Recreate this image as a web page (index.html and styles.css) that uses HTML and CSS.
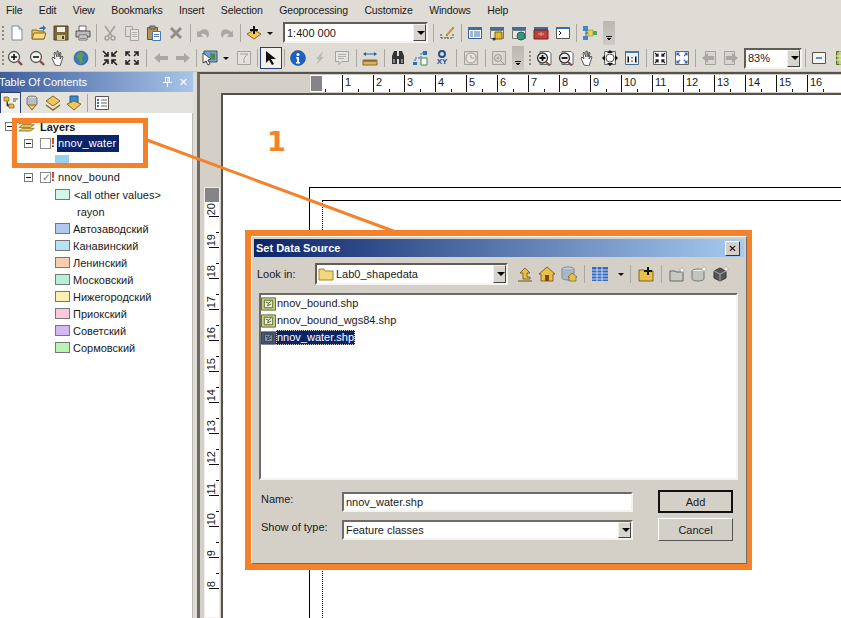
FILE: index.html
```html
<!DOCTYPE html>
<html lang="en">
<head>
    <meta charset="UTF-8">
    <title>ArcMap - Set Data Source</title>
    <link rel="stylesheet" href="styles.css">
</head>
<body>
    <svg class="defs" width="0" height="0">
        <symbol id="i-new" viewBox="0 0 16 16"><path d="M3 1h7l3 3v11H3z" fill="#fff" stroke="#7d8a99"/><path d="M10 1v3h3" fill="#dde" stroke="#7d8a99"/></symbol>
        <symbol id="i-open" viewBox="0 0 16 16"><path d="M1 5h5l1 1h6v8H1z" fill="#e8c55a" stroke="#8a6a1c"/><path d="M1 14l2-6h12l-2 6z" fill="#f5dc85" stroke="#8a6a1c"/><path d="M8 4c1-2 3-2 4-2V0l3 3-3 3V4c-1 0-2 0-4 0z" fill="#2c6fb5"/></symbol>
        <symbol id="i-save" viewBox="0 0 16 16"><path d="M1 1h14v14H1z" fill="#7a6a3a" stroke="#4c4220"/><path d="M4 2h8v5H4z" fill="#f1efe5"/><path d="M4 10h8v5H4z" fill="#d9c98f"/><path d="M9 11h2v3H9z" fill="#4c4220"/></symbol>
        <symbol id="i-print" viewBox="0 0 16 16"><path d="M4 1h7v5H4z" fill="#fff" stroke="#666"/><path d="M1 6h14v6H1z" fill="#bdbdb8" stroke="#555"/><path d="M4 10h8v5H4z" fill="#fff" stroke="#666"/><path d="M5 12h6M5 13.500h6" stroke="#888"/></symbol>
        <symbol id="i-cut" viewBox="0 0 16 16"><path d="M3 1l7 10M13 1L6 11" stroke="#a3a39c" stroke-width="1.600" fill="none"/><circle cx="5" cy="13" r="2" fill="none" stroke="#a3a39c" stroke-width="1.500"/><circle cx="11" cy="13" r="2" fill="none" stroke="#a3a39c" stroke-width="1.500"/></symbol>
        <symbol id="i-copy" viewBox="0 0 16 16"><path d="M1.500 1.500h7v10h-7z" fill="#ddd" stroke="#a3a39c"/><path d="M6.500 4.500h8v11h-8z" fill="#e6e4de" stroke="#a3a39c"/><path d="M8 7.500h5M8 9.500h5M8 11.500h5" stroke="#b0b0aa"/></symbol>
        <symbol id="i-paste" viewBox="0 0 16 16"><path d="M1.500 2.500h10v12h-10z" fill="#b8925a" stroke="#705426"/><path d="M4 1h5v3H4z" fill="#999" stroke="#555"/><path d="M6.500 6.500h8v9h-8z" fill="#fff" stroke="#4a76a8"/><path d="M8 9.500h5M8 11.500h5" stroke="#4a76a8"/></symbol>
        <symbol id="i-del" viewBox="0 0 16 16"><path d="M3 3l10 10M13 3L3 13" stroke="#8f8f8a" stroke-width="3"/></symbol>
        <symbol id="i-undo" viewBox="0 0 16 16"><path d="M4 6c4-3 9-2 9 3 0 2-1 3-2 4 0-3-2-5-6-4l2 3H1V5l1 2z" fill="#a9a9a3"/></symbol>
        <symbol id="i-redo" viewBox="0 0 16 16"><path d="M12 6C8 3 3 4 3 9c0 2 1 3 2 4 0-3 2-5 6-4l-2 3h6V5l-1 2z" fill="#a9a9a3"/></symbol>
        <symbol id="i-add" viewBox="0 0 16 16"><path d="M8 5l7 4-7 5-7-5z" fill="#efc75e" stroke="#8a6a1c"/><path d="M7 1h2v3h3v2H9v3H7V6H4V4h3z" fill="#111"/></symbol>
        <symbol id="i-editor" viewBox="0 0 16 16"><path d="M2 13h12M2 9v4M8 9v4M14 9v4" stroke="#444" stroke-dasharray="2 1"/><path d="M7 10l7-8 1 1-7 8z" fill="#d9a441" stroke="#8a6a1c" stroke-width=".5"/></symbol>
        <symbol id="i-toc" viewBox="0 0 16 16"><path d="M1.500 2.500h13v11h-13z" fill="#fff" stroke="#3a5a8c"/><path d="M1 2h14v3H1z" fill="#3a6ea8"/><path d="M3 7h3M7 7h6M3 9h3M7 9h6M3 11h3M7 11h6" stroke="#3a6ea8"/></symbol>
        <symbol id="i-catalog" viewBox="0 0 16 16"><path d="M1 2h14v3H1z" fill="#3a6ea8"/><path d="M1.500 5.500h13v8h-13z" fill="#e9e6dc" stroke="#777"/><path d="M6 7h7v7H6z" fill="#e0b92c" stroke="#7a6410"/><circle cx="5" cy="14" r="1.500" fill="#333"/></symbol>
        <symbol id="i-search" viewBox="0 0 16 16"><path d="M1 2h14v3H1z" fill="#3a6ea8"/><path d="M1.500 5.500h13v8h-13z" fill="#e9e6dc" stroke="#777"/><circle cx="10" cy="11" r="4" fill="#3a9a6a" stroke="#1c5a8c"/></symbol>
        <symbol id="i-toolbox" viewBox="0 0 16 16"><path d="M1 2h14v3H1z" fill="#3a6ea8"/><path d="M1 5h14v9H1z" fill="#c0403a" stroke="#70201c"/><path d="M5 9h6M8 7v4" stroke="#e8a0a0"/></symbol>
        <symbol id="i-python" viewBox="0 0 16 16"><path d="M1.500 2.500h13v11h-13z" fill="#fff" stroke="#555"/><path d="M1 2h14v2H1z" fill="#3a6ea8"/><path d="M4 6l2 2-2 2" stroke="#111" fill="none"/></symbol>
        <symbol id="i-model" viewBox="0 0 16 16"><path d="M4 4v8M4 8h7" stroke="#555"/><path d="M1 1h5v5H1zM1 11h5v4H1z" fill="#3a8ad0"/><path d="M6 5h5v6H6z" fill="#e6d84a" stroke="#777" stroke-width=".5"/><path d="M11 6h4v4h-4z" fill="#4aa860"/></symbol>
        <symbol id="i-zin" viewBox="0 0 16 16"><circle cx="7" cy="7" r="5.500" fill="#f3f3ee" stroke="#555" stroke-width="1.300"/><path d="M4 7h6M7 4v6" stroke="#111" stroke-width="1.600"/><path d="M11 11l4 4" stroke="#8c4a4a" stroke-width="2.400"/></symbol>
        <symbol id="i-zout" viewBox="0 0 16 16"><circle cx="7" cy="7" r="5.500" fill="#f3f3ee" stroke="#555" stroke-width="1.300"/><path d="M4 7h6" stroke="#111" stroke-width="1.600"/><path d="M11 11l4 4" stroke="#8c4a4a" stroke-width="2.400"/></symbol>
        <symbol id="i-pan" viewBox="0 0 16 16"><path d="M4 15L1 8l1-1 2 2-1-6 1-1 2 5V1h1l1 6 1-5 1 1-1 6 2-3 1 1-2 6-1 3z" fill="#fff" stroke="#333" stroke-width=".8"/></symbol>
        <symbol id="i-globe" viewBox="0 0 16 16"><circle cx="8" cy="8" r="7" fill="#3a78c0" stroke="#28508a" stroke-width=".6"/><path d="M5 3l4-1 2 3-2 3 1 4-3 2-1-5-3-2z" fill="#5aa050"/></symbol>
        <symbol id="i-fin" viewBox="0 0 16 16"><path d="M1 1l5 5M6 2v4H2M15 1l-5 5M10 2v4h4M1 15l5-5M6 14v-4H2M15 15l-5-5M10 14v-4h4" stroke="#222" stroke-width="1.600" fill="none"/></symbol>
        <symbol id="i-fout" viewBox="0 0 16 16"><path d="M6 6L2 2M2 6V2h4M10 6l4-4M14 6V2h-4M6 10l-4 4M2 10v4h4M10 10l4 4M14 10v4h-4" stroke="#222" stroke-width="1.500" fill="none"/></symbol>
        <symbol id="i-back" viewBox="0 0 16 16"><path d="M1 8l6-5v3h8v4H7v3z" fill="#a9a9a3"/></symbol>
        <symbol id="i-fwd" viewBox="0 0 16 16"><path d="M15 8L9 3v3H1v4h8v3z" fill="#a9a9a3"/></symbol>
        <symbol id="i-select" viewBox="0 0 16 16"><path d="M2 1h13v11H2z" fill="#6aa6d0" stroke="#555"/><path d="M8 3l5 1v6l-4-1z" fill="#4a8a4a"/><path d="M1 3l8 6-3 1 2 4-2 1-2-4-3 2z" fill="#fff" stroke="#222" stroke-width=".8"/></symbol>
        <symbol id="i-clear" viewBox="0 0 16 16"><path d="M1.500 1.500h13v13h-13z" fill="#e4e2dc" stroke="#a3a39c"/><path d="M4 4h8l-4 4v5M12 4L8 8" stroke="#a3a39c" fill="none"/></symbol>
        <symbol id="i-arrow" viewBox="0 0 16 16"><path d="M3 1l10 8H8l3 5-2 1-3-5-3 3z" fill="#111"/></symbol>
        <symbol id="i-info" viewBox="0 0 16 16"><circle cx="8" cy="8" r="7.500" fill="#1c62c0" stroke="#123f80" stroke-width=".5"/><path d="M6 7h3v5h1v1.500H6V12h1V8.500H6z" fill="#fff"/><circle cx="8" cy="4.500" r="1.500" fill="#fff"/></symbol>
        <symbol id="i-bolt" viewBox="0 0 16 16"><path d="M11 1L4 9h3l-3 6 8-8H9z" fill="#b9b9b3"/></symbol>
        <symbol id="i-popup" viewBox="0 0 16 16"><path d="M1.500 1.500h13v10H8l-3 3v-3H1.500z" fill="#e6e4de" stroke="#a3a39c"/><path d="M4 4.500h8M4 6.500h8M4 8.500h6" stroke="#b0b0aa"/></symbol>
        <symbol id="i-measure" viewBox="0 0 16 16"><path d="M1 10h14v5H1z" fill="#d9b168" stroke="#8a6a1c"/><path d="M3 10v2M5 10v2M7 10v2M9 10v2M11 10v2M13 10v2" stroke="#6a4c10"/><path d="M1 4l3-2v1.500h8V2l3 2-3 2V4.500H4V6z" fill="#1c62a8"/></symbol>
        <symbol id="i-find" viewBox="0 0 16 16"><path d="M2 6l2-5h3v5h2V1h3l2 5v8H9V9H7v5H2z" fill="#333"/><path d="M3 9h2v4H3zM11 9h2v4h-2z" fill="#8b8b8b"/></symbol>
        <symbol id="i-route" viewBox="0 0 16 16"><path d="M3 14V8h6V3h4" stroke="#2c6fb5" fill="none" stroke-dasharray="2 1"/><path d="M1 12h4v3H1zM11 1h4v4h-4z" fill="#2c6fb5"/><path d="M9 8h6v7H9z" fill="#fff" stroke="#3a8a4a"/></symbol>
        <symbol id="i-clock" viewBox="0 0 16 16"><path d="M1.500 1.500h13v13h-13z" fill="#d9d7d0" stroke="#a3a39c"/><circle cx="8" cy="8" r="5" fill="#e8e6e0" stroke="#9a9a94"/><path d="M8 5v3h3" stroke="#9a9a94" fill="none"/></symbol>
        <symbol id="i-viewer" viewBox="0 0 16 16"><path d="M1.500 1.500h13v13h-13z" fill="#d9d7d0" stroke="#a3a39c"/><circle cx="7" cy="8" r="3.500" fill="none" stroke="#9a9a94"/><path d="M5.500 8h3M7 6.500v3M10 11l3 3" stroke="#9a9a94"/></symbol>
        <symbol id="i-pzin" viewBox="0 0 16 16"><path d="M4 1.500h9l2 2v11H4z" fill="#fff" stroke="#666"/><circle cx="6.500" cy="8" r="5" fill="#eee" stroke="#333" stroke-width="1.300"/><path d="M3.500 8h6M6.500 5v6" stroke="#111" stroke-width="1.800"/><path d="M10 12l4 3.500" stroke="#8c4a4a" stroke-width="2.200"/></symbol>
        <symbol id="i-pzout" viewBox="0 0 16 16"><path d="M4 1.500h9l2 2v11H4z" fill="#fff" stroke="#666"/><circle cx="6.500" cy="8" r="5" fill="#eee" stroke="#333" stroke-width="1.300"/><path d="M3.500 8h6" stroke="#111" stroke-width="1.800"/><path d="M10 12l4 3.500" stroke="#8c4a4a" stroke-width="2.200"/></symbol>
        <symbol id="i-pfull" viewBox="0 0 16 16"><path d="M2.500 1.500h11v13h-11z" fill="#e8e8e2" stroke="#666"/><circle cx="8" cy="8" r="4" fill="#fff" stroke="#555"/><path d="M8 0l3 3H5zM8 16l-3-3h6zM0 8l3-3v6zM16 8l-3 3V5z" fill="#111"/></symbol>
        <symbol id="i-p11" viewBox="0 0 16 16"><path d="M1.500 1.500h13v13h-13z" fill="#eef1f4" stroke="#4a6a8c"/><path d="M1 1h14v2H1z" fill="#4a78a8"/><path d="M3.500 6.500h1.500v6H3.500zM11 6.500h1.500v6H11zM7.500 7h1v1.500h-1zM7.500 10.500h1V12h-1z" fill="#111"/></symbol>
        <symbol id="i-pfin" viewBox="0 0 16 16"><path d="M1.500 1.500h13v13h-13z" fill="#fff" stroke="#666"/><path d="M3 3l3 3M6 3.500V6H3.500M13 3l-3 3M10 3.500V6h2.500M3 13l3-3M6 12.500V10H3.500M13 13l-3-3M10 12.500V10h2.500" stroke="#222" stroke-width="1.300" fill="none"/></symbol>
        <symbol id="i-pfout" viewBox="0 0 16 16"><path d="M1.500 1.500h13v13h-13z" fill="#fff" stroke="#666"/><path d="M6 6L3 3M3 5.500V3h2.500M10 6l3-3M13 5.500V3h-2.500M6 10l-3 3M3 10.500V13h2.500M10 10l3 3M13 10.500V13h-2.500" stroke="#3a6ea8" stroke-width="1.200" fill="none"/></symbol>
        <symbol id="i-pback" viewBox="0 0 16 16"><path d="M4.500 1.500h10v13h-10z" fill="#d9d7d0" stroke="#a3a39c"/><path d="M1 8l6-5v3h6v4H7v3z" fill="#a9a9a3"/></symbol>
        <symbol id="i-pfwd" viewBox="0 0 16 16"><path d="M1.500 1.500h10v13h-10z" fill="#d9d7d0" stroke="#a3a39c"/><path d="M15 8L9 3v3H3v4h6v3z" fill="#a9a9a3"/></symbol>
        <symbol id="i-focus" viewBox="0 0 16 16"><path d="M1.500 2.500h13v11h-13z" fill="#f4f4ef" stroke="#555"/><path d="M5 8h6" stroke="#3a6ea8" stroke-width="1.500"/></symbol>
        <symbol id="i-grid" viewBox="0 0 16 16"><path d="M1.500 1.500h13v13h-13z" fill="#a6bc5a" stroke="#5a6a20"/><path d="M5 1v14M9 1v14M1 6h14M1 10h14" stroke="#e4ecc0"/></symbol>
        <symbol id="t-list" viewBox="0 0 16 16"><path d="M1 2h4l1 1v3H1zM6 9h4l1 1v3H6z" fill="#e8b84a" stroke="#8a6a1c" stroke-width=".8"/><path d="M4 6v5h2M10 4h5M10 6h3" stroke="#555"/></symbol>
        <symbol id="t-source" viewBox="0 0 16 16"><ellipse cx="8" cy="3" rx="5" ry="2" fill="#d7d9dd" stroke="#777"/><path d="M3 3v6c0 1 2 2 5 2s5-1 5-2V3" fill="#b9bcc2" stroke="#777"/><path d="M4 10l4 5 4-5z" fill="#efc75e" stroke="#8a6a1c"/></symbol>
        <symbol id="t-vis" viewBox="0 0 16 16"><path d="M8 1l7 5-7 5-7-5z" fill="#efc75e" stroke="#8a6a1c"/><path d="M1 10l7 5 7-5" fill="none" stroke="#8a6a1c" stroke-width="1.500"/></symbol>
        <symbol id="t-sel" viewBox="0 0 16 16"><path d="M4 1h8v7H4z" fill="#3a8ad0" stroke="#1c5a8c"/><path d="M1 9l7-3 7 3-7 6z" fill="#efc75e" stroke="#8a6a1c"/></symbol>
        <symbol id="t-opt" viewBox="0 0 16 16"><path d="M1.500 1.500h13v13h-13z" fill="#fff" stroke="#555"/><path d="M3 4h2v2H3zM3 7h2v2H3zM3 10h2v2H3z" fill="#3a6ea8"/><path d="M7 5h6M7 8h6M7 11h6" stroke="#666"/></symbol>
        <symbol id="i-layers" viewBox="0 0 20 14"><path d="M5 1h13l-4 3H1zM5 5h13l-4 3H1zM5 9h13l-4 3H1z" fill="#efc75e" stroke="#8a6a1c" stroke-width=".9"/></symbol>
        <symbol id="i-folder" viewBox="0 0 16 14"><path d="M1 2h5l1 2h8v9H1z" fill="#f2d77c" stroke="#a5852a"/></symbol>
        <symbol id="d-up" viewBox="0 0 16 16"><path d="M8 2l5 5h-3v4h3v2H6V7H3z" fill="#e8c04a" stroke="#6a5210" stroke-width=".8"/><path d="M1 15h14" stroke="#6a5210"/></symbol>
        <symbol id="d-home" viewBox="0 0 16 16"><path d="M8 1L0 8h2v7h12V8h2z" fill="#e8c04a" stroke="#6a5210" stroke-width=".8"/><path d="M6 9h4v6H6z" fill="#7a4a1c"/></symbol>
        <symbol id="d-dbhome" viewBox="0 0 16 16"><ellipse cx="7" cy="3" rx="6" ry="2" fill="#c9d4e0" stroke="#7a8896"/><path d="M1 3v9c0 1 3 2 6 2s6-1 6-2V3" fill="#aab6c4" stroke="#7a8896"/><path d="M11 7l5 4h-1v4H8v-4H7z" fill="#e8c04a" stroke="#6a5210" stroke-width=".6"/></symbol>
        <symbol id="d-views" viewBox="0 0 16 16"><path d="M0 1h16v14H0z" fill="#3a6ac0"/><path d="M5 1v14M10 1v14M0 4h16M0 7h16M0 10h16M0 13h16" stroke="#e0ecff" stroke-width=".8"/></symbol>
        <symbol id="d-newconn" viewBox="0 0 16 16"><path d="M1 4h5l1 1h8v10H1z" fill="#e8c04a" stroke="#6a5210" stroke-width=".8"/><path d="M9 1h2v3h3v2h-3v3H9V6H6V4h3z" fill="#111"/></symbol>
        <symbol id="d-newfold" viewBox="0 0 16 16"><path d="M1 5h5l1 1h7v9H1z" fill="#c9c9c3" stroke="#666"/><path d="M13 1l1 2 2 1-2 1-1 2-1-2-2-1 2-1z" fill="#fff" stroke="#999" stroke-width=".5"/></symbol>
        <symbol id="d-newdb" viewBox="0 0 16 16"><ellipse cx="7" cy="5" rx="6" ry="2" fill="#eee" stroke="#777"/><path d="M1 5v8c0 1 3 2 6 2s6-1 6-2V5" fill="#c4c4be" stroke="#777"/><path d="M13 0l1 2 2 1-2 1-1 2-1-2-2-1 2-1z" fill="#fff" stroke="#999" stroke-width=".5"/></symbol>
        <symbol id="d-newtool" viewBox="0 0 16 16"><path d="M1 5l6-3 6 3v7l-6 3-6-3z" fill="#555" stroke="#333"/><path d="M1 5l6 3 6-3M7 8v7" stroke="#aaa" fill="none"/><path d="M13 0l1 2 2 1-2 1-1 2-1-2-2-1 2-1z" fill="#fff" stroke="#999" stroke-width=".5"/></symbol>
        <symbol id="d-shp" viewBox="0 0 16 16"><path d="M.5 1.500h15v13H.5z" fill="#c9d48a" stroke="#55652a"/><path d="M3.500 4h9v8h-9z" fill="#f2f2e0" stroke="#55652a"/><path d="M5 6l3 1-1 3 4-2M8 7l3-2" stroke="#55652a" fill="none"/></symbol>
        <symbol id="d-shpsel" viewBox="0 0 16 16"><path d="M.5 1.500h15v13H.5z" fill="#4c5c72" stroke="#2c3850"/><path d="M3.500 4h9v8h-9z" fill="#8090a4" stroke="#2c3850"/><path d="M5 6l3 1-1 3 4-2M8 7l3-2" stroke="#2c3850" fill="none"/></symbol>
        <symbol id="i-pin" viewBox="0 0 9 10"><path d="M2.500.5h4v5h-4zM5 1v4" fill="none" stroke="#fff"/><path d="M0 5.500h9M4.500 6v4" stroke="#fff"/></symbol>
    </svg>

    <nav class="menubar">
        <span>File</span><span>Edit</span><span>View</span><span>Bookmarks</span><span>Insert</span><span>Selection</span><span>Geoprocessing</span><span>Customize</span><span>Windows</span><span>Help</span>
    </nav>

    <div class="toolbar toolbar-top">
        <span class="grip"></span>
        <span class="tool"><svg><use href="#i-new"/></svg></span>
        <span class="tool"><svg><use href="#i-open"/></svg></span>
        <span class="tool"><svg><use href="#i-save"/></svg></span>
        <span class="tool"><svg><use href="#i-print"/></svg></span>
        <span class="sep"></span>
        <span class="tool"><svg><use href="#i-cut"/></svg></span>
        <span class="tool"><svg><use href="#i-copy"/></svg></span>
        <span class="tool"><svg><use href="#i-paste"/></svg></span>
        <span class="tool"><svg><use href="#i-del"/></svg></span>
        <span class="sep sep-6"></span>
        <span class="tool"><svg><use href="#i-undo"/></svg></span>
        <span class="tool"><svg><use href="#i-redo"/></svg></span>
        <span class="sep sep-6"></span>
        <span class="tool"><svg><use href="#i-add"/></svg></span>
        <span class="drop-arrow"></span>
        <div class="combo scale-combo"><span class="combo-text">1:400 000</span><span class="combo-btn"></span></div>
        <span class="sep"></span>
        <span class="tool"><svg><use href="#i-editor"/></svg></span>
        <span class="sep sep-6"></span>
        <span class="tool"><svg><use href="#i-toc"/></svg></span>
        <span class="tool"><svg><use href="#i-catalog"/></svg></span>
        <span class="tool"><svg><use href="#i-search"/></svg></span>
        <span class="tool"><svg><use href="#i-toolbox"/></svg></span>
        <span class="tool"><svg><use href="#i-python"/></svg></span>
        <span class="sep"></span>
        <span class="tool"><svg><use href="#i-model"/></svg></span>
        <span class="chevron"></span>
    </div>

    <div class="toolbar toolbar-second">
        <span class="grip grip-thin"></span>
        <span class="tool"><svg><use href="#i-zin"/></svg></span>
        <span class="tool"><svg><use href="#i-zout"/></svg></span>
        <span class="tool"><svg><use href="#i-pan"/></svg></span>
        <span class="tool"><svg><use href="#i-globe"/></svg></span>
        <span class="sep sep-7"></span>
        <span class="tool"><svg><use href="#i-fin"/></svg></span>
        <span class="tool"><svg><use href="#i-fout"/></svg></span>
        <span class="sep sep-7"></span>
        <span class="tool"><svg><use href="#i-back"/></svg></span>
        <span class="tool"><svg><use href="#i-fwd"/></svg></span>
        <span class="sep"></span>
        <span class="tool"><svg><use href="#i-select"/></svg></span>
        <span class="drop-arrow"></span>
        <span class="tool gap-left"><svg><use href="#i-clear"/></svg></span>
        <span class="sep"></span>
        <span class="tool is-active"><svg><use href="#i-arrow"/></svg></span>
        <span class="sep"></span>
        <span class="tool"><svg><use href="#i-info"/></svg></span>
        <span class="tool"><svg><use href="#i-bolt"/></svg></span>
        <span class="tool"><svg><use href="#i-popup"/></svg></span>
        <span class="sep sep-6"></span>
        <span class="tool"><svg><use href="#i-measure"/></svg></span>
        <span class="sep sep-6"></span>
        <span class="tool"><svg><use href="#i-find"/></svg></span>
        <span class="tool"><svg><use href="#i-route"/></svg></span>
        <span class="tool xy"><span class="xy-dot"></span><b>XY</b></span>
        <span class="sep sep-7"></span>
        <span class="tool"><svg><use href="#i-clock"/></svg></span>
        <span class="sep sep-6"></span>
        <span class="tool"><svg><use href="#i-viewer"/></svg></span>
        <span class="chevron"></span>
        <span class="grip grip-inner"></span>
        <span class="tool"><svg><use href="#i-pzin"/></svg></span>
        <span class="tool"><svg><use href="#i-pzout"/></svg></span>
        <span class="tool"><svg><use href="#i-pan"/></svg></span>
        <span class="tool"><svg><use href="#i-pfull"/></svg></span>
        <span class="tool"><svg><use href="#i-p11"/></svg></span>
        <span class="sep sep-6"></span>
        <span class="tool"><svg><use href="#i-pfin"/></svg></span>
        <span class="tool"><svg><use href="#i-pfout"/></svg></span>
        <span class="sep"></span>
        <span class="tool"><svg><use href="#i-pback"/></svg></span>
        <span class="tool"><svg><use href="#i-pfwd"/></svg></span>
        <div class="combo zoom-combo"><span class="combo-text">83%</span><span class="combo-btn"></span></div>
        <span class="sep sep-6"></span>
        <span class="tool"><svg><use href="#i-focus"/></svg></span>
        <span class="tool gap-left"><svg><use href="#i-grid"/></svg></span>
    </div>

    <main class="workspace">
        <aside class="toc">
            <div class="toc-title">
                <span>Table Of Contents</span>
                <span class="toc-actions"><svg class="pin"><use href="#i-pin"/></svg><i class="close-x">✕</i></span>
            </div>
            <div class="toc-tools">
                <span class="tool is-active"><svg><use href="#t-list"/></svg></span>
                <span class="tool"><svg><use href="#t-source"/></svg></span>
                <span class="tool"><svg><use href="#t-vis"/></svg></span>
                <span class="tool"><svg><use href="#t-sel"/></svg></span>
                <span class="sep sep-7"></span>
                <span class="tool"><svg><use href="#t-opt"/></svg></span>
            </div>
            <ul class="tree">
                <li class="row lvl-0"><span class="expander"></span><svg class="layers-ico"><use href="#i-layers"/></svg><b class="layers-name">Layers</b></li>
                <li class="row lvl-1"><span class="expander"></span><span class="check"></span><span class="bang">!</span><span class="layer-name is-selected">nnov_water</span></li>
                <li class="row lvl-2"><span class="swatch-water"></span></li>
                <li class="row lvl-1"><span class="expander"></span><span class="check is-checked">✓</span><span class="bang">!</span><span class="layer-name">nnov_bound</span></li>
                <li class="row lvl-2"><span class="swatch swatch-other"></span><span class="legend-other">&lt;all other values&gt;</span></li>
                <li class="row lvl-3">rayon</li>
                <li class="row lvl-2"><span class="swatch swatch-blue"></span>Автозаводский</li>
                <li class="row lvl-2"><span class="swatch swatch-sky"></span>Канавинский</li>
                <li class="row lvl-2"><span class="swatch swatch-peach"></span>Ленинский</li>
                <li class="row lvl-2"><span class="swatch swatch-mint"></span>Московский</li>
                <li class="row lvl-2"><span class="swatch swatch-yellow"></span>Нижегородский</li>
                <li class="row lvl-2"><span class="swatch swatch-pink"></span>Приокский</li>
                <li class="row lvl-2"><span class="swatch swatch-violet"></span>Советский</li>
                <li class="row lvl-2"><span class="swatch swatch-green"></span>Сормовский</li>
            </ul>
        </aside>

        <section class="layout-view">
            <div class="ruler-h">
                <span class="ruler-corner"></span>
                <span class="tick-h first"></span>
                <span class="tick-h">1</span><span class="tick-h">2</span><span class="tick-h">3</span><span class="tick-h">4</span>
                <span class="tick-h">5</span><span class="tick-h">6</span><span class="tick-h">7</span><span class="tick-h">8</span>
                <span class="tick-h">9</span><span class="tick-h">10</span><span class="tick-h">11</span><span class="tick-h">12</span>
                <span class="tick-h">13</span><span class="tick-h">14</span><span class="tick-h">15</span><span class="tick-h">16</span>
            </div>
            <div class="page-row">
                <div class="ruler-v">
                    <span class="ruler-corner-v"></span>
                    <span class="tick-v first"><em>20</em></span>
                    <span class="tick-v"><em>19</em></span><span class="tick-v"><em>18</em></span><span class="tick-v"><em>17</em></span>
                    <span class="tick-v"><em>16</em></span><span class="tick-v"><em>15</em></span><span class="tick-v"><em>14</em></span>
                    <span class="tick-v"><em>13</em></span><span class="tick-v"><em>12</em></span><span class="tick-v"><em>11</em></span>
                    <span class="tick-v"><em>10</em></span><span class="tick-v"><em>9</em></span><span class="tick-v"><em>8</em></span>
                </div>
                <div class="page">
                    <div class="frame-outer"><div class="frame-inner"></div></div>
                </div>
            </div>
        </section>
    </main>

    <svg class="callout" width="841" height="618">
        <rect x="14.500" y="120.500" width="131" height="45" fill="none" stroke="#f5822a" stroke-width="5"/>
        <line x1="147" y1="140" x2="396" y2="232" stroke="#f5822a" stroke-width="3"/>
    </svg>
    <span class="step-number">1</span>

    <div class="dialog-wrap">
        <div class="dialog">
            <div class="dialog-title">
                <span>Set Data Source</span>
                <span class="dialog-close"></span>
            </div>
            <div class="look-row">
                <label class="look-label">Look in:</label>
                <div class="combo look-combo">
                    <svg class="folder-ico"><use href="#i-folder"/></svg>
                    <span class="combo-text">Lab0_shapedata</span>
                    <span class="combo-btn"></span>
                </div>
                <div class="dialog-tools">
                    <span class="tool"><svg><use href="#d-up"/></svg></span>
                    <span class="tool"><svg><use href="#d-home"/></svg></span>
                    <span class="tool"><svg><use href="#d-dbhome"/></svg></span>
                    <span class="sep sep-9"></span>
                    <span class="tool"><svg><use href="#d-views"/></svg></span>
                    <span class="drop-arrow views-arrow"></span>
                    <span class="sep sep-9"></span>
                    <span class="tool"><svg><use href="#d-newconn"/></svg></span>
                    <span class="sep sep-9"></span>
                    <span class="tool"><svg><use href="#d-newfold"/></svg></span>
                    <span class="tool"><svg><use href="#d-newdb"/></svg></span>
                    <span class="tool"><svg><use href="#d-newtool"/></svg></span>
                </div>
            </div>
            <ul class="file-list">
                <li class="file"><svg><use href="#d-shp"/></svg><span>nnov_bound.shp</span></li>
                <li class="file"><svg><use href="#d-shp"/></svg><span>nnov_bound_wgs84.shp</span></li>
                <li class="file is-selected"><svg><use href="#d-shpsel"/></svg><span>nnov_water.shp</span></li>
            </ul>
            <div class="form-row name-row">
                <label>Name:</label>
                <div class="field"><span class="combo-text">nnov_water.shp</span></div>
                <button class="btn btn-default">Add</button>
            </div>
            <div class="form-row">
                <label>Show of type:</label>
                <div class="combo field"><span class="combo-text">Feature classes</span><span class="combo-btn"></span></div>
                <button class="btn">Cancel</button>
            </div>
        </div>
    </div>
</body>
</html>
```

FILE: styles.css
```css
* {
    margin: 0;
    padding: 0;
    box-sizing: border-box;
}

html, body {
    width: 841px;
    height: 618px;
    overflow: hidden;
}

body {
    font-family: "Liberation Sans", Arial, sans-serif;
    font-size: 11px;
    color: #1a1a1a;
    background: #dfdcd5;
    position: relative;
    display: flex;
    flex-direction: column;
}

ul {
    list-style: none;
}

.defs {
    position: absolute;
}

/* menu + toolbars */
.menubar {
    height: 19px;
    margin-bottom: 1px;
    flex: none;
    display: flex;
    align-items: center;
    gap: 16.500px;
    padding-left: 6px;
    font-size: 10.500px;
    letter-spacing: -0.15px;
}

.toolbar {
    flex: none;
    display: flex;
    align-items: center;
    white-space: nowrap;
    overflow: hidden;
    background: #dfdcd5;
}

.toolbar-top {
    height: 25px;
}

.toolbar-second {
    height: 26px;
}

.grip {
    width: 6px;
    height: 16px;
    flex: none;
    background: radial-gradient(circle, #8c8a84 1px, transparent 1.200px) 0 0 / 6px 4px;
}

.grip-thin {
    width: 4px;
}

.grip-inner {
    margin-left: 3px;
}

.tool {
    width: 22px;
    height: 22px;
    flex: none;
    display: flex;
    align-items: center;
    justify-content: center;
}

.tool svg {
    width: 16px;
    height: 16px;
}

.tool.is-active {
    background: #f2f0ea;
    border: 1px solid #2a3f6e;
}

.gap-left {
    margin-left: 2px;
}

.sep {
    width: 5px;
    height: 18px;
    flex: none;
    background: linear-gradient(#aaa7a0, #aaa7a0) center / 1px 100% no-repeat;
}

.sep-6 { width: 6px; }
.sep-7 { width: 7px; }
.sep-9 { width: 9px; }

.drop-arrow {
    width: 10px;
    height: 22px;
    flex: none;
    position: relative;
}

.drop-arrow::after {
    content: "";
    position: absolute;
    left: 2px;
    top: 10px;
    border: 3px solid transparent;
    border-top-color: #111;
}

.views-arrow {
    margin-left: 5px;
}

.chevron {
    width: 12px;
    height: 24px;
    flex: none;
    margin-left: 2px;
    background:
        linear-gradient(#111, #111) 3px 15px / 6px 1px no-repeat,
        linear-gradient(#111, #111) 4px 17px / 4px 1px no-repeat,
        linear-gradient(#111, #111) 5px 18px / 2px 1px no-repeat,
        linear-gradient(#b9b7b0, #cfccc5);
}

.xy {
    flex-direction: column;
    color: #24508c;
    font-size: 8px;
    line-height: 8px;
}

.xy-dot {
    width: 8px;
    height: 8px;
    border: 2px solid #24508c;
    border-radius: 50%;
}

.combo {
    display: flex;
    align-items: center;
    background: #fff;
    border: 2px solid;
    border-color: #5f5d58 #f4f3ef #f4f3ef #5f5d58;
    flex: none;
}

.combo-text {
    flex: 1;
    padding-left: 2px;
    font-size: 11px;
    white-space: nowrap;
}

.combo-btn {
    width: 13px;
    align-self: stretch;
    flex: none;
    position: relative;
    background: #d8d5ce;
    border: 1px solid;
    border-color: #f2f0ea #444 #444 #f2f0ea;
}

.combo-btn::after {
    content: "";
    position: absolute;
    left: 2.500px;
    top: 50%;
    margin-top: -2px;
    border: 4px solid transparent;
    border-bottom: 0;
    border-top-color: #000;
}

.scale-combo {
    width: 145px;
    height: 21px;
    margin-left: 8px;
    margin-right: 3px;
}

.zoom-combo {
    width: 58px;
    height: 21px;
    margin-left: 2px;
}

/* main area */
.workspace {
    flex: 1;
    min-height: 0;
    display: flex;
    border-top: 1px solid #c9c6bf;
}

.toc {
    width: 197px;
    flex: none;
    display: flex;
    flex-direction: column;
    padding-right: 4px;
}

.toc-title {
    height: 20px;
    flex: none;
    display: flex;
    align-items: center;
    justify-content: space-between;
    padding-right: 5px;
    color: #fff;
    font-size: 11px;
    background: linear-gradient(90deg, #3c5f9e, #a8c4e8);
}

.toc-title > span:first-child {
    margin-left: -1px;
}

.toc-actions {
    display: flex;
    align-items: center;
    gap: 7px;
}

.pin {
    width: 9px;
    height: 10px;
}

.close-x {
    font-style: normal;
    font-size: 11px;
    font-family: "DejaVu Sans", sans-serif;
}

.toc-tools {
    height: 21px;
    flex: none;
    display: flex;
    align-items: center;
    background: #e4e2dc;
}

.toc-tools .tool {
    width: 21px;
}

.tree {
    flex: 1;
    background: #fff;
    padding-top: 5px;
    border-right: 1px solid #bdbab3;
}

.row {
    height: 17px;
    display: flex;
    align-items: center;
    white-space: nowrap;
}

.lvl-0 {
    padding-left: 5px;
}

.lvl-1 {
    padding-left: 24px;
}

.lvl-2 {
    padding-left: 55px;
}

.lvl-3 {
    padding-left: 77px;
}

.expander {
    width: 9px;
    height: 9px;
    flex: none;
    border: 1px solid #777;
    background: linear-gradient(#111, #111) center / 5px 1px no-repeat;
}

.layers-ico {
    width: 18px;
    height: 13px;
    margin-left: 4px;
}

.layers-name {
    margin-left: 4px;
}

.check {
    width: 11px;
    height: 11px;
    flex: none;
    margin-left: 7px;
    border: 1px solid #8c8c88;
    background: #fff;
    color: #9a9a96;
    font-size: 10px;
    font-weight: bold;
    line-height: 9px;
    text-align: center;
}

.bang {
    width: 5px;
    flex: none;
    color: #a81c22;
    font-weight: bold;
    font-size: 12px;
    line-height: 11px;
}

.layer-name {
    margin-left: 1px;
    padding: 0 3px 0 1px;
    line-height: 17px;
    font-size: 11px;
    letter-spacing: 0.15px;
}

.layer-name.is-selected {
    background: #0a246a;
    color: #fff;
}

.swatch-water {
    width: 14px;
    height: 8px;
    margin-top: -4px;
    background: #95d3ee;
}

.swatch {
    width: 15px;
    height: 11px;
    flex: none;
    margin-right: 3px;
    border: 1px solid #777;
}

.legend-other {
    margin-left: 1px;
}

.swatch-other { background: #d3f7e6; }
.swatch-blue { background: #b0c8f2; }
.swatch-sky { background: #b5e2f5; }
.swatch-peach { background: #f8cdb2; }
.swatch-mint { background: #b6f0d8; }
.swatch-yellow { background: #fbf0b0; }
.swatch-pink { background: #fbc8de; }
.swatch-violet { background: #d2b8f2; }
.swatch-green { background: #b8f5b4; }

.layout-view {
    flex: 1;
    min-width: 0;
    display: flex;
    flex-direction: column;
    background: #d4d0c8;
    border-left: 3px solid #6e6c67;
    border-top: 2px solid #55534e;
}

.ruler-h {
    height: 17px;
    flex: none;
    display: flex;
    margin: 1px 0 0 110px;
    background: #fff;
    border: 1px solid #efede8;
    border-width: 0 0 0 1px;
    font-size: 11px;
    line-height: 14px;
    overflow: hidden;
}

.ruler-corner {
    width: 11px;
    flex: none;
    margin: 1px 0;
    background: #858585;
}

.tick-h {
    width: 31px;
    flex: none;
    padding-left: 2px;
    border-left: 1px solid #111;
    background: linear-gradient(#111, #111) 15px 100% / 1px 3px no-repeat;
}

.tick-h.first {
    width: 20px;
    border-left: 0;
    background-position: 3px 100%;
}

.page-row {
    flex: 1;
    min-height: 0;
    display: flex;
    margin-top: 1px;
}

.ruler-v {
    width: 16px;
    flex: none;
    margin: 94px 0 0 4px;
    display: flex;
    flex-direction: column;
    background: #fff;
    border: 1px solid #efede8;
    overflow: hidden;
    font-size: 11px;
}

.ruler-corner-v {
    height: 14px;
    flex: none;
    background: #858585;
}

.tick-v {
    height: 31px;
    flex: none;
    display: flex;
    align-items: flex-end;
    background:
        linear-gradient(#111, #111) 100% 100% / 10px 1px no-repeat,
        linear-gradient(#111, #111) 100% 15px / 3px 1px no-repeat;
}

.tick-v.first {
    height: 15px;
    background: linear-gradient(#111, #111) 100% 100% / 10px 1px no-repeat;
}

.tick-v em {
    font-style: normal;
    writing-mode: vertical-rl;
    transform: rotate(180deg);
    line-height: 11px;
    margin: 0 0 2px 1px;
}

.page {
    flex: 1;
    min-width: 0;
    margin-left: 1px;
    padding: 92px 0 0 86px;
    background: #fff;
    border-top: 2px solid #55534e;
    border-left: 2px solid #55534e;
}

.frame-outer {
    height: 100%;
    margin-right: -4px;
    padding: 12px 0 0 12px;
    border: 1px solid #000;
    border-width: 1px 0 0 1px;
}

.frame-inner {
    height: 100%;
    border-top: 1px solid #000;
    border-left: 1px dotted #000;
}

/* overlays */
.callout {
    position: absolute;
    left: 0;
    top: 0;
    pointer-events: none;
}

.step-number {
    position: absolute;
    left: 267px;
    top: 126px;
    color: #f5822a;
    font: bold 27px/32px "DejaVu Sans", sans-serif;
}

.dialog-wrap {
    position: absolute;
    left: 245px;
    top: 230px;
    width: 507px;
    height: 340px;
    padding: 6px 5px 6px 6px;
    background: #f5822a;
}

.dialog {
    height: 100%;
    padding: 2px 2px 0;
    background: #d4d0c8;
    border: 1px solid #6e6c67;
    border-top-color: #fff;
    border-left-color: #fff;
}

.dialog-title {
    height: 18px;
    display: flex;
    align-items: center;
    justify-content: space-between;
    padding: 0 4px 0 2px;
    color: #fff;
    font-weight: bold;
    font-size: 11px;
    background: linear-gradient(90deg, #0a246a, #a6caf0);
}

.dialog-close {
    width: 15px;
    height: 15px;
    background: #d4d0c8;
    border: 1px solid;
    border-color: #fff #333 #333 #fff;
    position: relative;
}

.dialog-close::after {
    content: "✕";
    position: absolute;
    left: 0;
    right: 0;
    top: 0;
    text-align: center;
    color: #000;
    font: bold 10px/13px "DejaVu Sans", sans-serif;
}

.look-row {
    display: flex;
    align-items: center;
    margin-top: 6px;
    padding-left: 3px;
    height: 22px;
}

.look-label {
    width: 58px;
    flex: none;
    font-size: 11px;
}

.look-combo {
    width: 193px;
    height: 22px;
}

.folder-ico {
    width: 16px;
    height: 14px;
    margin-left: 1px;
}

.dialog-tools {
    display: flex;
    align-items: center;
    margin-left: 6px;
}

.file-list {
    height: 187px;
    margin: 8px 6px 0 5px;
    background: #fff;
    border: 2px solid;
    border-color: #6e6c67 #f4f3ef #f4f3ef #6e6c67;
}

.file {
    height: 17px;
    display: flex;
    align-items: center;
    font-size: 11px;
}

.file svg {
    width: 15px;
    height: 16px;
    flex: none;
}

.file span {
    padding: 0 1px;
    line-height: 15px;
}

.file.is-selected span {
    background: #0a246a;
    color: #fff;
    outline: 1px dotted #d4d0c8;
    outline-offset: -1px;
}

.form-row {
    display: flex;
    align-items: center;
    height: 23px;
    margin-top: 5px;
    padding-left: 7px;
    font-size: 11px;
}

.name-row {
    margin-top: 10px;
}

.form-row label {
    width: 81px;
    flex: none;
    padding-bottom: 6px;
}

.field {
    width: 291px;
    height: 20px;
    display: flex;
    align-items: center;
    background: #fff;
    border: 2px solid;
    border-color: #6e6c67 #f4f3ef #f4f3ef #6e6c67;
}

.btn {
    width: 75px;
    height: 23px;
    margin-left: 25px;
    font: inherit;
    color: inherit;
    background: #d4d0c8;
    border: 1px solid;
    border-color: #fff #555 #555 #fff;
}

.btn-default {
    border: 2px solid #111;
}
```
